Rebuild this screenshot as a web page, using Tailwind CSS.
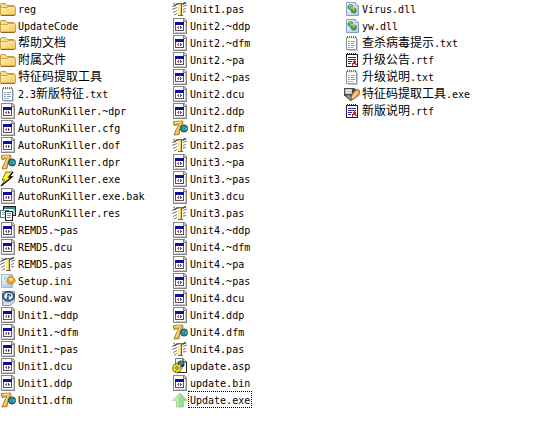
<!DOCTYPE html>
<html lang="zh-CN">
<head>
<meta charset="utf-8">
<title>文件列表</title>
<script src="https://cdn.jsdelivr.net/npm/@tailwindcss/browser@4"></script>
</head>
<body class="min-h-screen bg-white text-black">
<svg class="absolute size-0" aria-hidden="true">
  <defs>
    <linearGradient id="gold" x1="0" y1="0" x2="1" y2="1"><stop offset="0" stop-color="#fff6b8"/><stop offset="1" stop-color="#f0c75a"/></linearGradient>
    <linearGradient id="blue" x1="0" y1="0" x2="1" y2="1"><stop offset="0" stop-color="#f4f9ff"/><stop offset="1" stop-color="#a9c8ef"/></linearGradient>
    <linearGradient id="green" x1="0" y1="0" x2="1" y2="0"><stop offset="0" stop-color="#c4e9b8"/><stop offset="1" stop-color="#86cc78"/></linearGradient>
    <symbol id="folder" viewBox="0 0 16 16">
      <path d="M.5 13.500V3.500Q.5 2.500 1.500 2.500H5.500L7 4.500H13.500Q14.500 4.500 14.500 5.500V13.500Z" fill="#f8df86" stroke="#c2993a"/>
      <path d="M.5 14V7.500Q.5 6.500 1.500 6.500H7L8.500 5.500H14.500Q15.500 5.500 15.500 6.500V13Q15.500 14 14.500 14Z" fill="url(#gold)" stroke="#cda548"/>
      <path d="M1 14.500H14.500L15.500 13.500" fill="none" stroke="#916716"/>
    </symbol>
    <symbol id="text" viewBox="0 0 16 16">
      <path d="M2.500 2.500H12.500V14.500H2.500Z" fill="#fbfdff" stroke="#8796a2"/>
      <path d="M13.500 4V15.500H4" fill="none" stroke="#c4cad0"/>
      <path d="M3 2.500H12" stroke="#e8dfae" stroke-width="2"/>
      <path d="M3.500 1V3M5.500 1V3M7.500 1V3M9.500 1V3M11.500 1V3" stroke="#66727b"/>
      <path d="M4 6.500H6M7 6.500H11M4 8.500H6M7 8.500H10M4 10.500H6M7 10.500H11M4 12.500H6M7 12.500H9" stroke="#7fa0c8"/>
    </symbol>
    <symbol id="module" viewBox="0 0 16 16" shape-rendering="crispEdges">
      <path d="M1 0H12L15 3V16H1Z" fill="#858585"/>
      <path d="M2 1H11V4H14V15H2Z" fill="#fff"/>
      <path d="M12 1H13V2H14V3H12Z" fill="#ccc"/>
      <path d="M13 4H14V15H13ZM3 14H14V15H3Z" fill="#c9c9c9"/>
      <path d="M3 4H12V13H3Z" fill="#555"/>
      <path d="M3 4H12V7H3Z" fill="#10109a"/>
      <path d="M4 7H11V12H4Z" fill="#fff"/>
      <path d="M5 9H6V8H7V11H6V10H5Z" fill="#cf5048"/>
      <path d="M8 8H9V9H10V10H9V11H8Z" fill="#2c5fb0"/>
    </symbol>
    <symbol id="delphi" viewBox="0 0 16 16">
      <path d="M1.500 1.500L10.500 1L11 3L8 9L7 14.500L2 15L4 10L7 4.500L2 5.500Z" fill="#e9b745" stroke="#b07a20"/>
      <path d="M2.500 2.500L9 2" fill="none" stroke="#fff0a0"/>
      <path d="M8 4L5.500 10L4 14" fill="none" stroke="#fae392"/>
      <circle cx="12" cy="8.500" r="3.600" fill="#247f9a" stroke="#1d4d66"/>
      <path d="M10 7L12 5.500L13 7L11.500 8.500L12 11L10 10.500Z" fill="#43a06b"/>
      <path d="M13 7.500H15V9.500L13 10.500Z" fill="#36bdc1"/>
    </symbol>
    <symbol id="bolt" viewBox="0 0 16 16">
      <path d="M6 1H13L9 6H12L1 15L5 9H2Z" fill="#ffef20" stroke="#77720b"/>
      <path d="M13 1L9 6H12L1 15" fill="none" stroke="#111" stroke-width="1.300"/>
      <path d="M7 2L4 8" stroke="#fff8a8"/>
    </symbol>
    <symbol id="resource" viewBox="0 0 16 16" shape-rendering="crispEdges">
      <path d="M3 1H16V11H3Z" fill="#222"/><path d="M4 2H15V10H4Z" fill="#fff"/><path d="M4 2H15V4H4Z" fill="#398886"/><path d="M13 4H15V10H13Z" fill="#9fcac6"/>
      <path d="M0 5H9V13H0Z" fill="#657777"/><path d="M1 6H8V12H1Z" fill="#fff"/><path d="M2 7.500H5M2 9.500H5" stroke="#78a09c"/>
      <path d="M5 6H13V16H5Z" fill="#222"/><path d="M6 7H12V15H6Z" fill="#fff"/>
      <path d="M7 8.500H11M7 10.500H11M7 12.500H11" stroke="#639491"/>
    </symbol>
    <symbol id="pas" viewBox="0 0 16 16">
      <path d="M0 5.500L4 4M0 8.500L5 6.500M1 11.500L5 9.500M2 14L5 12.500M11 5.500L15 4M11 8.500L14 7.500M11 11L14 10.500M1 3L3 2" fill="none" stroke="#777"/>
      <path d="M2 5L5 3L11 3L14 1.500" fill="none" stroke="#444" stroke-width="1.400"/>
      <path d="M6.500 3H10V14.500H6.500Z" fill="#edd05a"/>
      <path d="M9.500 3V14.500" stroke="#8d4f22"/><path d="M7.500 4V14" stroke="#fff6a8"/>
      <path d="M6 14.500H11" stroke="#796638"/>
    </symbol>
    <symbol id="config" viewBox="0 0 16 16">
      <path d="M1.500 1.500H12.500V14.500H1.500Z" fill="url(#blue)" stroke="#9fb8d0"/>
      <path d="M4 4.500H7M4 6.500H6M3 12.500H9" stroke="#b4cbe2"/>
      <path d="M9 3.500L12 3L14 5L15.500 7.500L14 10L11 11.500L8 10.500L6.500 8L7.500 6Z" fill="#e6a43a" stroke="#c17f2b" stroke-width=".7"/>
      <circle cx="11" cy="6.500" r="1.700" fill="#f9dc8b"/>
    </symbol>
    <symbol id="sound" viewBox="0 0 16 16">
      <path d="M2.500 1.500H14.500V11L10.500 15.500H2.500Z" fill="#c3d0dc" stroke="#8496a8"/>
      <path d="M4 14H10L13 11" fill="none" stroke="#edf3f7"/>
      <ellipse cx="8.500" cy="6.300" rx="6" ry="4.800" fill="#315f91" stroke="#263e5d"/>
      <ellipse cx="8.500" cy="6.200" rx="4.300" ry="3.400" fill="#e8f1f8"/>
      <path d="M8 9.500V4.500Q11 4 10.500 6.500M8 8.500H6.500" fill="none" stroke="#1c375f" stroke-width="1.300"/>
    </symbol>
    <symbol id="asp" viewBox="0 0 16 16">
      <path d="M3.500 .5H11L14.500 4V14.500H3.500Z" fill="#fff" stroke="#777"/>
      <path d="M14.500 4V14.500H6M11 .5V4H14.500" fill="none" stroke="#222"/>
      <circle cx="9" cy="6" r="3.500" fill="#17348d"/><path d="M7 4L10 3L12 5L10 7L8 6Z" fill="#39a34a"/>
      <path d="M4 5H6V7L8 6L9 8L8 9H10V11H8L9 13L7 14L6 13V15H4V13L2 14L1 12L2 11H0V9H2L1 7L3 6L4 7Z" fill="#f5df26" stroke="#78700c" stroke-width=".7"/>
      <circle cx="5" cy="10" r="1.300" fill="#fff" stroke="#665e08"/>
    </symbol>
    <symbol id="up" viewBox="0 0 16 16">
      <path d="M8 1L15 8.500H11.500V15H4.500V8.500H1Z" fill="url(#green)" stroke="#97cd8c" stroke-width=".8"/>
      <path d="M8 2.500L3 8H5.500V14" fill="none" stroke="#dcf3d4" stroke-width=".8"/>
    </symbol>
    <symbol id="dll" viewBox="0 0 16 16">
      <path d="M2.500 1.500H11.500L14.500 4.500V14.500H2.500Z" fill="url(#blue)" stroke="#7f9fc5"/>
      <path d="M11.500 1.500V4.500H14.500" fill="#fff" stroke="#91add0"/>
      <circle cx="6.500" cy="6" r="2.600" fill="#69b35f" stroke="#347d3a" stroke-width=".7"/>
      <circle cx="9.700" cy="9.500" r="2.600" fill="#4f9c49" stroke="#3a7438" stroke-width=".7"/>
      <path d="M7 6L10 5V8L7 8Z" fill="#e0bb45"/><path d="M5 5L7 4M9 9L11 8" stroke="#b6df9c"/>
    </symbol>
    <symbol id="rtf" viewBox="0 0 16 16" shape-rendering="crispEdges">
      <path d="M2 2H14V15H2Z" fill="#222"/><path d="M3 3H13V14H3Z" fill="#fff"/>
      <path d="M3.500 1V3M5.500 1V3M7.500 1V3M9.500 1V3M11.500 1V3" stroke="#222"/>
      <path d="M4 5.500H12M4 7.500H12M4 9.500H8M4 11.500H7" stroke="#252f99"/>
      <path d="M8 13.500L10.500 8.500L12.500 13.500M8 11.500H12" fill="none" stroke="#cb2430" stroke-width="1.500"/>
    </symbol>
    <symbol id="tool" viewBox="0 0 16 16">
      <path d="M0 2H10L13 4V10H0Z" fill="#4b4b4b"/><path d="M1 3H8V8H1Z" fill="#c4c4c4"/>
      <path d="M2 4.500H7M2 6.500H6" stroke="#efefef"/>
      <path d="M1 10L5 8L9 12L7 15Z" fill="#8a8a8a" stroke="#444" stroke-width=".7"/>
      <path d="M7 14L8 8L13 3L16 5L15 9L10 13Z" fill="#e4a560" stroke="#875225" stroke-width=".8"/>
      <path d="M8 12L13 6" stroke="#ffe0a5" stroke-width="1.300"/>
    </symbol>
  </defs>
</svg>
<main>
  <ul id="files" class="grid grid-flow-col grid-rows-[repeat(24,17px)] auto-cols-[172px]"></ul>
</main>
<script>
const files = [
  ['folder', 'reg UpdateCode 帮助文档 附属文件 特征码提取工具'],
  ['text', '2.3新版特征.txt'],
  ['module', 'AutoRunKiller.~dpr AutoRunKiller.cfg AutoRunKiller.dof'],
  ['delphi', 'AutoRunKiller.dpr'],
  ['bolt', 'AutoRunKiller.exe'],
  ['module', 'AutoRunKiller.exe.bak'],
  ['resource', 'AutoRunKiller.res'],
  ['module', 'REMD5.~pas REMD5.dcu'],
  ['pas', 'REMD5.pas'],
  ['config', 'Setup.ini'],
  ['sound', 'Sound.wav'],
  ['module', 'Unit1.~ddp Unit1.~dfm Unit1.~pas Unit1.dcu Unit1.ddp'],
  ['delphi', 'Unit1.dfm'],
  ['pas', 'Unit1.pas'],
  ['module', 'Unit2.~ddp Unit2.~dfm Unit2.~pa Unit2.~pas Unit2.dcu Unit2.ddp'],
  ['delphi', 'Unit2.dfm'],
  ['pas', 'Unit2.pas'],
  ['module', 'Unit3.~pa Unit3.~pas Unit3.dcu'],
  ['pas', 'Unit3.pas'],
  ['module', 'Unit4.~ddp Unit4.~dfm Unit4.~pa Unit4.~pas Unit4.dcu Unit4.ddp'],
  ['delphi', 'Unit4.dfm'],
  ['pas', 'Unit4.pas'],
  ['asp', 'update.asp'],
  ['module', 'update.bin'],
  ['up', 'Update.exe'],
  ['dll', 'Virus.dll yw.dll'],
  ['text', '查杀病毒提示.txt'],
  ['rtf', '升级公告.rtf'],
  ['text', '升级说明.txt'],
  ['tool', '特征码提取工具.exe'],
  ['rtf', '新版说明.rtf']
].flatMap(([icon, names]) => names.split(' ').map(name => [icon, name]));

// Chinese characters are two Latin columns wide, so they take a larger size.
const label = name => name.replace(/[\u4e00-\u9fff]+/g, '<span class="text-[12px]">$&</span>');

document.getElementById('files').innerHTML = files.map(([icon, name]) => `
  <li class="flex"><a href="#" class="flex h-[17px] items-center whitespace-nowrap">
    <svg class="size-4 shrink-0" aria-hidden="true"><use href="#${icon}"/></svg>
    <span class="h-[17px] border border-dotted px-px font-['DejaVu_Sans_Mono','Noto_Sans_CJK_SC',monospace] text-[10px] leading-[17px] ${name === 'Update.exe' ? 'border-black' : 'border-transparent'}">${label(name)}</span>
  </a></li>`).join('');
</script>
</body>
</html>
